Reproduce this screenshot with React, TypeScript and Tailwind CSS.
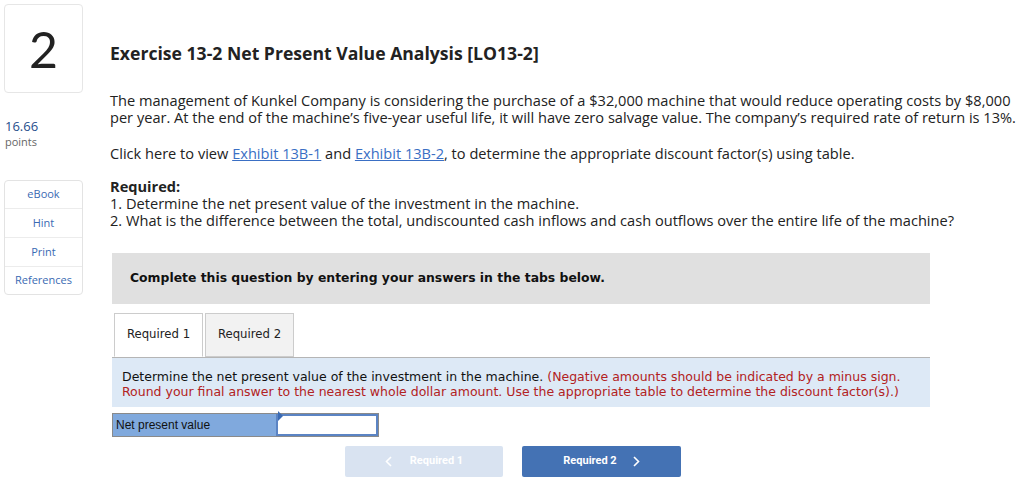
import React from "react";

const sans = { fontFamily: "'Open Sans', Lato, sans-serif" };
const verdana = { fontFamily: "'DejaVu Sans', Verdana, sans-serif" };
const arial = { fontFamily: "'Liberation Sans', Arial, sans-serif" };

export default function App() {
  return (
    <div className="w-[1024px] h-[498px] bg-white flex overflow-hidden" style={sans}>
      <div className="w-[110px] shrink-0 pl-[4px] pt-[4px] flex flex-col">
        <div className="w-[79px] h-[89px] border border-[#e6e6e6] rounded-[4px] flex items-center justify-center text-[50px] text-[#222] leading-none" style={{ fontFamily: "Lato, sans-serif" }}>
          2
        </div>
        <div className="mt-[25px] pl-[1px] text-[13px] text-[#1f4e8c] leading-[16px]">16.66</div>
        <div className="pl-[1px] mt-[1px] text-[11px] text-[#666] leading-[14px]">points</div>
        <div className="mt-[31px] w-[79px] border border-[#e3e3e3] rounded-[4px] flex flex-col text-[11px] text-[#3a6ab3]">
          <div className="h-[28px] flex items-center justify-center border-b border-[#ececec]">eBook</div>
          <div className="h-[29px] flex items-center justify-center border-b border-[#ececec]">Hint</div>
          <div className="h-[29px] flex items-center justify-center border-b border-[#ececec]">Print</div>
          <div className="h-[27px] flex items-center justify-center">References</div>
        </div>
      </div>
      <div className="flex-1 flex flex-col">
        <div className="mt-[42px] text-[17.6px] font-bold text-[#222] leading-[22px]">
          Exercise 13-2 Net Present Value Analysis [LO13-2]
        </div>
        <div className="mt-[28px] text-[14.6px] text-[#222] leading-[17px] whitespace-nowrap">
          The management of Kunkel Company is considering the purchase of a $32,000 machine that would reduce operating costs by $8,000
          <br />
          per year. At the end of the machine’s five-year useful life, it will have zero salvage value. The company’s required rate of return is 13%.
        </div>
        <div className="mt-[19px] text-[14.6px] text-[#222] leading-[17px]">
          Click here to view <span className="text-[#3a6fc4] underline">Exhibit 13B-1</span> and{" "}
          <span className="text-[#3a6fc4] underline">Exhibit 13B-2</span>, to determine the appropriate discount factor(s) using table.
        </div>
        <div className="mt-[16px] text-[14.6px] text-[#222] leading-[17px]">
          <div className="font-bold">Required:</div>
          <div>1. Determine the net present value of the investment in the machine.</div>
          <div>2. What is the difference between the total, undiscounted cash inflows and cash outflows over the entire life of the machine?</div>
        </div>
        <div className="ml-[2px] mt-[24px] w-[818px] h-[51px] bg-[#e0e0e0] flex items-center pl-[18px] text-[12.4px] font-bold text-[#111]" style={verdana}>
          Complete this question by entering your answers in the tabs below.
        </div>
        <div className="ml-[4px] mt-[9px] flex gap-[2px] text-[11.7px] text-[#222]" style={verdana}>
          <div className="w-[89px] h-[44px] bg-white border border-[#cccccc] border-b-white flex items-center justify-center">
            Required 1
          </div>
          <div className="w-[89px] h-[44px] bg-[#f2f2f2] border border-[#cccccc] flex items-center justify-center">
            Required 2
          </div>
        </div>
        <div className="ml-[2px] w-[818px] h-[50px] bg-[#dde9f6] border-t border-[#b5b5b5] pl-[10px] pt-[11px] text-[12.5px] leading-[15px] text-[#111] whitespace-nowrap" style={verdana}>
          Determine the net present value of the investment in the machine.{" "}
          <span className="text-[#b22222]">(Negative amounts should be indicated by a minus sign.</span>
          <br />
          <span className="text-[#b22222]">Round your final answer to the nearest whole dollar amount. Use the appropriate table to determine the discount factor(s).)</span>
        </div>
        <div className="ml-[2px] mt-[6px] flex w-[267px] h-[24px] border border-[#8a8a8a]">
          <div className="w-[163px] bg-[#80a9dd] flex items-center pl-[3px] text-[12px] text-[#111]" style={arial}>
            Net present value
          </div>
          <div className="flex-1 bg-white border-2 border-[#5b84c4] relative">
            <div className="absolute left-0 top-0 w-0 h-0 border-t-[5px] border-t-transparent border-b-[5px] border-b-transparent border-l-[5px] border-l-[#3a6ab3] -translate-y-[5px]"></div>
          </div>
        </div>
        <div className="ml-[235px] mt-[9px] flex gap-[19px] text-[11px] font-bold text-white" style={{ fontFamily: "Roboto, sans-serif" }}>
          <div className="w-[158px] h-[31px] bg-[#d9e3f1] rounded-[2px] flex items-center justify-center gap-[18px]">
            <svg width="7" height="11" viewBox="0 0 7 11"><path d="M6 1 L1.5 5.5 L6 10" stroke="white" strokeWidth="1.6" fill="none" /></svg>
            <span>Required 1</span>
          </div>
          <div className="w-[159px] h-[31px] bg-[#4472b4] rounded-[2px] flex items-center justify-center gap-[16px]">
            <span>Required 2</span>
            <svg width="7" height="11" viewBox="0 0 7 11"><path d="M1 1 L5.5 5.5 L1 10" stroke="white" strokeWidth="1.6" fill="none" /></svg>
          </div>
        </div>
      </div>
    </div>
  );
}
